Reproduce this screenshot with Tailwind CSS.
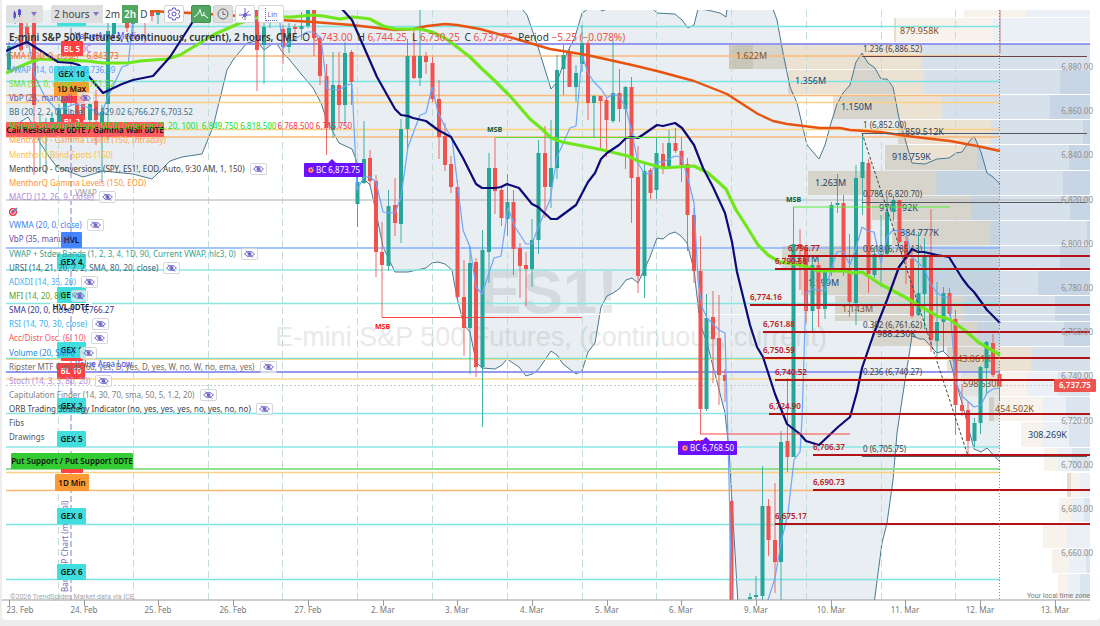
<!DOCTYPE html>
<html lang="en">
<head>
    <meta charset="UTF-8">
    <meta name="viewport" content="width=device-width, initial-scale=1.0">
    <title>E-mini S&amp;P 500 Futures - 2 hours</title>
    <script src="https://cdn.jsdelivr.net/npm/@tailwindcss/browser@4"></script>
</head>
<body class="bg-[#ededee] font-['Noto_Sans','Open_Sans',sans-serif] pl-[2px] pb-1">

    <main class="relative bg-white rounded-b overflow-hidden">

        <svg id="chart" class="block w-full h-auto" viewBox="2 0 1098 620" xmlns="http://www.w3.org/2000/svg" role="img" aria-label="ES1! 2 hour chart">
            <defs>
                <clipPath id="plot"><rect x="6" y="10" width="1084" height="590" /></clipPath>
            </defs>
            <g id="watermark" fill="#e9e9ea" text-anchor="middle" font-family="Liberation Sans, sans-serif">
                <text x="549" y="313" font-size="62" font-weight="700">ES1!</text>
                <text x="551" y="346" font-size="27">E-mini S&amp;P 500 Futures, (continuous, current)</text>
            </g>
            <g id="plot-area" clip-path="url(#plot)"></g>
            <g id="labels"></g>
            <g id="axes"></g>
        </svg>

        <!-- toolbar -->
        <header class="absolute top-[5px] left-[4px] flex items-center h-[18px] text-[10px] text-[#444]">
            <button aria-label="Chart type" class="flex items-center justify-between w-[37px] h-[18px] px-[6px] rounded-[2px] bg-[#dedede]/95">
                <svg class="w-[10px] h-[12px]" viewBox="0 0 10 12" fill="#5a4fc4" stroke="#5a4fc4"><path d="M2.500 3v8M7.500 1v8" /><rect x="2" y="5" width="1.500" height="4" /><rect x="6.500" y="2" width="2" height="4.500" /></svg>
                <svg class="w-[6px] h-[4px]" viewBox="0 0 6 4" fill="#7d74cc"><path d="M0 0h6L3 4z" /></svg>
            </button>
            <div class="flex items-center h-[18px] ml-2 bg-white rounded-[2px]">
                <label class="relative flex items-center h-[18px] bg-[#dedede] rounded-l-[2px]">
                    <select aria-label="Timeframe" class="appearance-none w-[52px] h-[18px] pl-[3px] text-[10px] bg-transparent"><option>2 hours</option></select>
                    <svg class="absolute right-1 w-[6px] h-[4px]" viewBox="0 0 6 4" fill="#7d74cc"><path d="M0 0h6L3 4z" /></svg>
                </label>
                <button class="w-[19px] h-[18px]">2m</button>
                <button class="w-4 h-[18px] bg-[#53a661] text-white font-semibold">2h</button>
                <button class="w-3 h-[18px]">D</button>
            </div>
            <button aria-label="Settings" class="flex items-center justify-center w-5 h-[18px] ml-[14px] rounded-[2px] bg-white border border-[#d5d5d5]">
                <svg class="w-[14px] h-[14px]" viewBox="0 0 14 14" fill="none" stroke="#5a4fc4"><path d="M5.700 1h2.600l.4 1.700 1.300.7 1.700-.5 1.300 2.200-1.200 1.200v1.400l1.200 1.200-1.300 2.200-1.700-.5-1.300.7-.4 1.700H5.700l-.4-1.700-1.300-.7-1.700.5L1 8.900l1.200-1.200V6.300L1 5.100l1.300-2.200 1.700.5 1.300-.7z" /><circle cx="7" cy="7" r="2" /></svg>
            </button>
            <button aria-label="Indicators" class="flex items-center justify-center w-5 h-[18px] ml-[7px] rounded-[2px] bg-[#53a661] border border-[#3f8f4e]">
                <svg class="w-4 h-3" viewBox="0 0 16 12" fill="none" stroke="#fff"><path d="M1 9l4-3 2-4 2 6 2-1 4 3" /><path d="M7 1v2M11 4v3" /></svg>
            </button>
            <button aria-label="History" class="flex items-center justify-center w-5 h-[18px] ml-[2px] rounded-[2px] bg-[#dedede] border border-[#d0d0d0]">
                <svg class="w-3 h-3" viewBox="0 0 12 12" fill="none" stroke="#666"><circle cx="6" cy="6" r="5" /><path d="M6 3v3.500h2.500" /></svg>
            </button>
            <button aria-label="Crosshair" class="flex items-center justify-center w-5 h-[18px] ml-[2px] rounded-[2px] bg-white border border-[#d5d5d5]">
                <svg class="w-[14px] h-[14px]" viewBox="0 0 14 14" fill="none" stroke="#6c63c7"><path d="M7 1v12M1 8h12M4 11l7-7" /><circle cx="7" cy="8" r="1.500" fill="#6c63c7" /></svg>
            </button>
            <button class="flex items-center justify-center w-[26px] h-[18px] ml-[3px] rounded-[2px] bg-white border border-[#d5d5d5] text-[7px] text-[#6c63c7]">
                <span class="border-l border-b border-dotted border-[#6c63c7] pl-[2px] pt-[2px] leading-[10px]">Lin</span>
            </button>
        </header>

        <!-- title + OHLC -->
        <h1 class="absolute top-[30px] left-[7px] flex items-center gap-[5px] h-[14px] whitespace-nowrap text-[10px] text-[#333]">
            <span class="font-semibold">E-mini S&amp;P 500 Futures, (continuous, current), 2 hours, CME</span>
            <span>O <b class="font-normal text-[#ef5350]">6,743.00</b></span>
            <span>H <b class="font-normal text-[#ef5350]">6,744.25</b></span>
            <span>L <b class="font-normal text-[#ef5350]">6,730.25</b></span>
            <span>C <b class="font-normal text-[#ef5350]">6,737.75</b></span>
            <span>Period <b class="font-normal text-[#ef5350]">−5.25 (−0.078%)</b></span>
        </h1>

        <!-- indicator legend, filled below -->
        <div id="legend" class="absolute top-[49px] left-[7px] flex flex-col gap-px text-[8px] leading-[14px] whitespace-nowrap"></div>
    </main>

    <script>
        const NS = 'http://www.w3.org/2000/svg';
        const plot = document.getElementById('plot-area');
        const labels = document.getElementById('labels');
        const axes = document.getElementById('axes');

        function add(parent, tag, attrs, text) {
            const el = document.createElementNS(NS, tag);
            for (const k in attrs) el.setAttribute(k, attrs[k]);
            if (text !== undefined) el.textContent = text;
            parent.appendChild(el);
            return el;
        }
        const line = (p, x1, y1, x2, y2, stroke, w = 1, extra = {}) =>
            add(p, 'line', { x1, y1, x2, y2, stroke, 'stroke-width': w, ...extra });
        const rect = (p, x, y, width, height, fill, extra = {}) =>
            add(p, 'rect', { x, y, width, height, fill, ...extra });
        const label = (p, x, y, text, fill, size = 8, extra = {}) =>
            add(p, 'text', { x, y, fill, 'font-size': size, ...extra }, text);

        // volume profile: y, height, left, beige end, blue end, strength
        const profile = [
            [10, 7, 964, 1027, 1090, 0], [18, 24, 894, 993, 1090, 0], [45, 24, 729, 921, 1090, 1],
            [70, 24, 788, 924, 1060, 1], [95, 24, 833, 942, 1050, 1], [120, 24, 898, 991, 1083, 1],
            [145, 25, 885, 977, 1069, 1], [171, 24, 808, 936, 1063, 1], [196, 24, 872, 971, 1070, 1],
            [221, 24, 892, 990, 1087, 1], [246, 24, 782, 921, 1060, 1], [271, 24, 801, 920, 1038, 1],
            [296, 25, 835, 964, 1055, 1], [322, 24, 872, 977, 1064, 1], [347, 24, 947, 1031, 1090, 1],
            [372, 24, 961, 1027, 1058, 0], [397, 24, 989, 1043, 1066, 0], [422, 25, 1021, 1043, 1069, 0],
            [448, 23, 1044, 1058, 1072, 0], [473, 24, 1067, 1080, 1090, 0], [498, 24, 1059, 1071, 1084, 0],
            [524, 24, 1043, 1067, 1090, 0], [549, 24, 1052, 1069, 1086, 0], [574, 24, 1058, 1068, 1080, 0],
        ];
        profile.forEach(([y, h, a, b, c, s]) => {
            rect(plot, a, y, b - a, h, s ? '#ece2d4' : '#f7f3ec');
            rect(plot, b, y, c - b, h, s ? '#d7e1ec' : '#eaf0f6');
            if (c < 1090) rect(plot, c, y, 1090 - c, h, s ? '#c8d5e4' : '#dbe5ef');
        });
        rect(plot, 729, 45, 24, 24, '#b8a888', { opacity: .3 });
        rect(plot, 989, 397, 5, 24, '#b8a080', { opacity: .3 });
        rect(plot, 894, 18, 2, 24, '#c8a890', { opacity: .3 });
        rect(plot, 1067, 473, 4, 24, '#c8a890', { opacity: .3 });

        // bollinger band
        const bbTop = '6,8 242,8 522,9 527,15 538,47 551,89 557,82 567,53 575,37 582,13 588,9 600,9 602,11 607,9 653,9 657,13 675,14 682,20 688,28 694,25 698,9 707,10 720,13 726,17 727,9 773,9 777,20 783,53 790,87 797,103 807,145 819,159 825,145 831,123 837,104 843,93 850,85 856,62 862,53 868,63 875,68 881,79 887,79 893,87 899,118 912,163 925,164 937,159 949,158 956,153 962,152 968,143 974,136 981,152 987,173 993,177 1000,184';
        const bbLow = '6,136 14,126 28,117 34,127 40,143 50,158 57,167 83,177 103,171 133,174 152,179 170,161 182,157 202,154 213,127 227,70 233,60 247,43 257,41 264,50 272,44 277,44 283,53 289,59 302,75 313,88 321,103 327,121 339,143 352,149 363,178 370,185 376,212 383,247 395,272 408,272 426,268 432,263 438,262 445,264 452,270 457,298 464,325 470,332 476,362 482,368 495,369 502,365 507,359 519,367 526,376 532,374 538,370 551,351 557,355 563,364 576,374 582,371 588,352 595,343 601,307 607,296 613,293 619,289 626,280 632,278 638,283 650,257 657,238 663,239 669,234 675,232 681,236 687,243 694,270 700,323 707,343 725,413 729,450 738,604 874,604 882,543 887,523 893,480 897,433 902,400 912,336 920,339 924,339 937,353 943,351 949,357 956,383 962,403 974,449 981,452 987,448 1000,462';
        add(plot, 'polygon', { points: bbTop + ' ' + bbLow.split(' ').reverse().join(' '), fill: '#4a7890', opacity: .13 });
        [bbTop, bbLow].forEach(points => add(plot, 'polyline', { points, fill: 'none', stroke: '#4a7890' }));

        // session separators
        [58.5, 133.5, 208.5, 282.5, 357.5, 432.5, 507.5, 582.5, 656.5, 731.5, 806.5, 881.5, 955.5].forEach(x =>
            line(plot, x, 10, x, 600, '#c4dcd7', 1, { 'stroke-dasharray': '7 4' }));
        line(plot, 71, 10, 71, 600, '#8a7fc0', 1, { 'stroke-dasharray': '6 3' });

        // key levels: y, colour, width, right end
        [
            [26.5, '#7de3e3', 1.3, 1000], [44, '#9498ee', 2, 1090], [56, '#fbb877', 1.3, 1000], [81.5, '#7de3e3', 1.3, 1000],
            [95.5, '#fbb877', 1.3, 1000], [102.5, '#fbd080', 1.3, 1000], [129.5, '#fbd080', 1.3, 1000], [137, '#fbb877', 1.3, 1000],
            [200, '#c4c7ca', 1.3, 1090], [248, '#86b0fb', 1.3, 1000], [270, '#8ae6e0', 1.3, 1000], [303.5, '#8ae6e0', 1.3, 1000],
            [314.5, '#ffffff', 1, 1090], [358.5, '#7de0d0', 1.3, 1000], [359.5, '#fbd890', 1, 1000], [372, '#9498ee', 2, 1000],
            [379, '#fbd890', 1.3, 1000], [413.5, '#8ae6e6', 1.3, 1000], [447, '#8ae6e6', 1.3, 1000], [469, '#90e090', 2, 1000],
            [472.5, '#fbd080', 1.3, 1000], [490.5, '#fbb877', 1.3, 1000], [524.5, '#7de3e3', 1.3, 1000], [579.5, '#7de3e3', 1.3, 1000],
        ].forEach(([y, c, w, x2]) => line(plot, 6, y, x2, y, c, w));
        line(plot, 6, 385.5, 1060, 385.5, '#c8c8c8', 1, { 'stroke-dasharray': '2 2' });

        // profile volumes
        [
            ['1.622M', 736, 59, 1], ['1.356M', 795, 84, 0], ['879.958K', 900, 34, 1], ['1.150M', 841, 110, 0],
            ['859.512K', 905, 135, 0], ['918.759K', 892, 160, 0], ['1.263M', 815, 186, 0], ['976.792K', 879, 211, 0],
            ['884.777K', 900, 236, 0], ['1.311M', 788, 262, 0], ['1.199M', 808, 286, 0], ['1.143M', 842, 312, 1],
            ['988.230K', 877, 337, 0], ['643.061K', 952, 362, 1], ['598.530K', 963, 387, 1], ['454.502K', 995, 412, 1],
            ['308.269K', 1028, 438, 0],
        ].forEach(([t, x, y, b]) => label(plot, x, y, t, b ? '#84521f' : '#1f436e', 9));

        // candles: x, high, low, body top, body bottom, up?
        const candles = [
            [9, 42, 72, 46, 70, 1], [15, 10, 24, 10, 22, 1], [21, 10, 52, 10, 50, 0], [27, 22, 48, 27, 42, 0],
            [34, 10, 175, 10, 105, 0], [40, 115, 172, 130, 133, 1], [46, 118, 171, 132, 136, 1], [52, 112, 130, 118, 125, 1],
            [59, 104, 130, 108, 122, 1], [65, 98, 128, 103, 118, 1], [77, 94, 128, 100, 115, 0], [83, 90, 130, 93, 120, 0],
            [90, 96, 130, 103, 120, 1], [96, 90, 145, 101, 120, 0], [102, 105, 183, 112, 125, 1], [108, 10, 140, 31, 104, 1],
            [114, 10, 37, 10, 34, 1], [127, 10, 32, 20, 28, 0], [133, 12, 34, 18, 24, 1], [145, 15, 43, 17, 19, 0],
            [152, 10, 21, 11, 16, 0], [158, 10, 24, 10, 15, 1], [257, 10, 91, 10, 50, 0], [264, 15, 84, 27, 45, 1],
            [270, 16, 28, 20, 23, 1], [283, 25, 64, 29, 47, 0], [289, 23, 53, 28, 47, 1], [295, 24, 33, 27, 29, 0],
            [301.5, 12, 40, 26, 29, 1], [308, 10, 28, 10, 26, 1], [314, 10, 56, 10, 38, 0], [320, 36, 85, 38, 76, 0],
            [326.5, 64, 155, 76, 128, 0], [333, 52, 138, 85, 130, 1], [339, 52, 128, 85, 105, 0], [345, 42, 125, 53, 105, 1],
            [351.5, 50, 105, 52, 82, 0], [357.5, 165, 227, 182, 204, 1], [364, 121, 184, 159, 183, 1], [370, 150, 186, 158, 181, 0],
            [376, 175, 277, 181, 252, 0], [382, 222, 317, 252, 265, 0], [388.5, 190, 271, 206, 266, 1], [395, 178, 236, 205, 223, 0],
            [401, 119, 243, 129, 224, 1], [407.5, 39, 150, 56, 129, 1], [414, 28, 79, 56, 78, 0], [420, 10, 86, 56, 78, 1],
            [426, 52, 74, 56, 62, 0], [432.5, 57, 102, 63, 99, 0], [439, 80, 159, 99, 137, 0], [445, 123, 171, 136, 165, 0],
            [451, 156, 193, 164, 187, 0], [457.5, 180, 301, 187, 297, 0], [464, 260, 356, 297, 328, 0], [470, 246, 374, 263, 328, 1],
            [476, 258, 377, 262, 367, 0], [482.5, 230, 427, 250, 367, 1], [489, 153, 283, 168, 252, 1], [495, 138, 214, 168, 191, 0],
            [501.5, 186, 226, 190, 218, 0], [507.5, 174, 236, 202, 219, 1], [513.5, 190, 275, 202, 249, 0], [520, 243, 298, 248, 266, 0],
            [526, 252, 306, 265, 269, 0], [532, 219, 287, 240, 269, 1], [538.5, 140, 254, 153, 240, 1], [545, 126, 218, 153, 187, 0],
            [551, 120, 208, 168, 187, 1], [557, 55, 179, 70, 168, 1], [563.5, 45, 95, 55, 69, 1], [569.5, 47, 87, 52, 87, 0],
            [576, 65, 102, 73, 87, 1], [582, 25, 72, 43, 64, 1], [588, 40, 120, 43, 103, 0], [594, 95, 137, 96, 103, 1],
            [600.5, 96, 149, 96, 101, 0], [606.5, 98, 157, 100, 120, 0], [613, 40, 123, 93, 121, 1], [619.5, 69, 122, 93, 109, 0],
            [625.5, 86, 169, 87, 109, 1], [631.5, 77, 223, 87, 178, 0], [638, 146, 293, 177, 276, 0], [644.5, 163, 298, 171, 276, 1],
            [650.5, 168, 199, 170, 193, 0], [656.5, 137, 199, 153, 190, 1], [663, 143, 174, 154, 167, 0], [669, 130, 168, 143, 167, 1],
            [675.5, 128, 153, 143, 151, 0], [681.5, 137, 182, 151, 165, 0], [687.5, 158, 251, 164, 215, 0], [694, 208, 283, 215, 271, 0],
            [700.5, 236, 434, 271, 409, 0], [706.5, 294, 411, 318, 409, 1], [713, 291, 383, 317, 339, 0], [719, 295, 405, 338, 375, 0],
            [725, 369, 402, 375, 381, 0], [731.5, 485, 600, 501, 600, 0], [750, 593, 600, 597, 599, 1], [756, 576, 600, 595, 597, 1],
            [762.5, 466, 600, 506, 596, 1], [768.5, 499, 556, 506, 540, 0], [775, 483, 593, 540, 562, 0], [781, 431, 600, 442, 562, 1],
            [787.5, 378, 472, 441, 457, 0], [793.5, 207, 457, 244, 457, 1], [800, 229, 290, 244, 249, 0], [806, 245, 323, 248, 311, 0],
            [812.5, 258, 331, 265, 311, 1], [818.5, 262, 327, 265, 309, 0], [825, 268, 319, 272, 309, 1], [831.5, 202, 276, 205, 268, 1],
            [837.5, 174, 213, 203, 205, 1], [843.5, 195, 276, 203, 269, 0], [849.5, 234, 317, 269, 302, 0], [856, 165, 325, 178, 303, 1],
            [862.5, 133, 215, 162, 178, 1], [868.5, 159, 293, 163, 274, 0], [874.5, 247, 278, 254, 275, 1], [881, 215, 287, 254, 256, 1],
            [887, 198, 257, 212, 254, 1], [893.5, 197, 221, 200, 212, 1], [899.5, 200, 243, 200, 242, 0], [906, 236, 284, 241, 259, 0],
            [912, 250, 318, 259, 316, 0], [918.5, 232, 316, 293, 315, 1], [924.5, 238, 329, 257, 294, 1], [931, 209, 352, 256, 340, 0],
            [937, 282, 358, 322, 341, 1], [943.5, 287, 352, 293, 322, 1], [949.5, 288, 316, 293, 314, 0], [955.5, 310, 435, 319, 405, 0],
            [962, 384, 416, 405, 411, 0], [968, 402, 456, 410, 441, 0], [974.5, 418, 447, 423, 441, 1], [980.5, 366, 434, 367, 423, 1],
            [986.5, 341, 394, 342, 368, 1], [993, 334, 377, 343, 375, 0], [999.5, 374, 401, 374, 386, 0],
        ];
        candles.forEach(([x, hi, lo, a, b, up]) => {
            const c = up ? '#26a69a' : '#ef5350';
            line(plot, x, hi, x, lo, c, 1, { opacity: .85 });
            rect(plot, x - 2, a, 4, Math.max(b - a, 1), c);
        });

        // moving averages
        const curves = [
            ['#6fa5fa', 1.2, '6,55 17,40 27,35 35,77 45,97 57,110 67,107 75,104 90,108 101,115 108,97 122,67 128,65 133,20 135,5'],
            ['#6fa5fa', 1.2, '278,5 281,33 283,48 293,40 307,32 313,32 321,38 327,89 339,90 347,85 352,84 357,190 364,177 370,177 376,182 383,212 395,213 401,197 408,147 420,115 426,113 432,87 438,112 445,127 452,138 457,180 463,230 470,247 476,287 482,294 494,258 501,256 508,208 515,227 526,244 532,244 538,228 550,200 557,157 570,128 576,126 582,55 588,73 594,82 601,89 607,98 613,94 619,96 626,108 632,133 638,163 644,173 650,174 657,162 663,162 675,156 681,157 687,175 694,203 698,280 702,307 707,318 719,330 725,333 728,440 732,605'],
            ['#6fa5fa', 1.2, '768,600 775,578 781,543 788,513 794,460 800,452 802,420 806,293 813,289 825,291 831,270 837,252 843,251 850,265 856,248 862,227 868,231 874,232 881,263 887,237 893,230 906,232 912,257 924,268 930,283 937,293 943,297 949,297 956,383 962,396 974,407 981,405 987,393 993,389 1000,388'],
            ['#e8530f', 2.4, '150,11 190,13 240,16 280,20 313,22 352,25 395,30 413,29 427,26 445,24 457,25 480,29 513,38 550,49 587,55 632,65 657,71 694,81 727,94 747,107 758,114 773,121 787,124 820,128 840,128 850,130 880,132 907,136 950,141 977,146 1000,151'],
            ['#70e61c', 3.2, '6,73 17,68 28,63 40,59 60,60 87,61 103,63 128,63 140,61 167,59 180,55 200,43 213,35 240,23 260,17 280,17 292,17 312,15 323,16 340,19 352,17 363,18 370,19 383,26 395,29 408,29 420,29 432,32 445,38 457,47 470,57 480,67 495,81 510,96 530,119 542,129 551,138 562,142 583,146 603,150 628,156 638,161 663,168 677,167 694,166 708,173 715,179 726,189 736,210 747,227 758,245 768,255 780,262 795,264 807,267 818,271 837,271 845,271 852,273 862,272 880,284 903,296 920,306 937,316 949,319 967,332 978,342 1000,355'],
            ['#0b0b78', 2.2, '6,51 17,46 27,42 35,47 58,62 72,63 79,65 103,93 122,84 133,80 153,76 170,57 192,23 204,5'],
            ['#0b0b78', 2.2, '341,8 352,20 363,45 377,77 395,109 401,115 408,116 413,118 426,121 438,130 451,137 463,158 476,184 482,188 495,188 501,187 507,184 519,188 532,204 538,207 551,219 557,219 576,205 588,182 595,173 601,159 607,153 619,145 626,138 632,137 638,138 644,134 657,125 663,126 675,123 682,128 694,145 703,168 713,187 725,213 732,242 737,272 750,325 757,347 763,357 775,394 787,424 800,434 806,441 819,445 838,427 850,417 857,392 862,368 874,333 887,300 899,267 912,249 918,252 924,252 937,255 949,257 962,278 968,286 974,292 987,310 993,316 1000,323'],
        ];
        curves.forEach(([stroke, w, points]) =>
            add(plot, 'polyline', { points, fill: 'none', stroke, 'stroke-width': w, 'stroke-linejoin': 'round' }));

        // market structure breaks
        line(plot, 495, 137.5, 675, 137.5, '#54dc3c');
        line(plot, 794, 207, 950, 207, '#54ee3c');
        line(plot, 382, 317.5, 582, 317.5, '#ff4444');
        line(plot, 700, 434, 850, 434, '#ff4444');
        const msb = { 'font-weight': 700 };
        label(labels, 487, 132, 'MSB', '#0b5a3a', 7, msb);
        label(labels, 786, 202, 'MSB', '#0b5a3a', 7, msb);
        label(labels, 375, 329, 'MSB', '#ff1111', 7, msb);
        label(labels, 693, 445, 'MSB', '#ff1111', 7, msb);

        // fibonacci retracement
        line(plot, 862, 133, 968, 456, '#444', 1, { 'stroke-dasharray': '3 2' });
        [['1.236 (6,886.52)', 56.5, 52], ['1 (6,852.00)', 133.5, 128], ['0.786 (6,820.70)', 202.5, 197], ['0.618 (6,785.13)', 256.5, 252],
         ['0.382 (6,761.62)', 332.5, 328], ['0.236 (6,740.27)', 380.5, 375], ['0 (6,705.75)', 456.5, 452]].forEach(([t, y, ty], i) => {
            line(plot, 862, y, 1087, y, i ? '#555a60' : '#6b4340');
            label(labels, 863, ty, t, '#444', 8);
        });

        // support / resistance
        [['6,796.77', 788, 256], ['6,790.68', 775, 269], ['6,774.16', 750, 305], ['6,761.88', 763, 332], ['6,750.59', 763, 358],
         ['6,740.52', 775, 380], ['6,724.90', 769, 414], ['6,706.37', 813, 455], ['6,690.73', 813, 490], ['6,675.17', 775, 524]].forEach(([t, x, y]) => {
            line(plot, x, y, 1090, y, '#b51218', 2);
            label(labels, x, y - 5, t, '#bb1a20', 8, { 'font-weight': 600 });
        });
        line(plot, 1000, 10, 1000, 53, '#c08080', 1);
        line(plot, 999.5, 10, 999.5, 600, '#e0559a', 1, { 'stroke-dasharray': '1 2' });

        // buy-climax flags
        [[304, 163, 'BC 6,873.75'], [678, 441, 'BC 6,768.50']].forEach(([x, y, t]) => {
            add(labels, 'path', { d: `M${x + 24} ${y}l4-4 4 4z`, fill: '#6a11ff' });
            rect(labels, x, y, 59, 14, '#6a11ff', { rx: 1 });
            target(labels, x + 7, y + 7);
            label(labels, x + 12, y + 10, t, '#fff', 8);
        });
        function target(p, cx, cy) {
            add(p, 'circle', { cx, cy, r: 3, fill: '#e8304a' });
            add(p, 'circle', { cx, cy, r: 2, fill: 'none', stroke: '#fff', 'stroke-width': .7 });
            line(p, cx, cy, cx + 3, cy - 3, '#3b8fe0', 1);
        }

        // level tags on the left: x, y, w, h, fill, text, text colour
        label(labels, 75, 39, 'Value Area Median', '#4040f0', 8);
        label(labels, 75, 52, 'POC', '#c070e0', 8);
        label(labels, 75, 196, 'VWAP', '#9a9a9a', 8);
        label(labels, 75, 367, 'Value Area Low', '#3434f4', 8);
        label(labels, 68, 592, 'Bars VbP Chart (manual)', '#7a68b0', 8, { transform: 'rotate(-90 68 592)' });
        rect(labels, 50, 303, 42, 9, '#ffffff');
        [
            [57, 18, 29, 8, '#40dede', ''], [61, 41, 22, 15, '#ff4144', 'BL 5', '#fff'], [61, 96, 22, 7, '#ff4144', ''],
            [54, 66, 35, 15, '#40dede', 'GEX 10'], [54, 82, 35, 14, '#ff9933', '1D Max'], [61, 114, 22, 15, '#ff4144', 'BL 2', '#fff'],
            [6, 122, 158, 15, '#ff5b60', 'Call Resistance 0DTE / Gamma Wall 0DTE'], [61, 232, 21, 16, '#4285ff', 'HVL'],
            [57, 254, 29, 15, '#40dede', 'GEX 4'], [57, 287, 29, 16, '#40dede', 'GEX 3'], [50, 299, 42, 15, 'none', 'HVL 0DTE'],
            [57, 342, 29, 16, '#40dede', 'GEX 1'], [61, 358, 22, 3, '#ff4144', ''], [57, 363, 28, 16, '#ff4144', 'BL 10', '#fff'],
            [57, 398, 29, 15, '#40dede', 'GEX 2'], [57, 431, 29, 16, '#40dede', 'GEX 5'], [61, 465, 22, 8, '#ff4144', ''],
            [11, 453, 122, 16, '#33cc33', 'Put Support / Put Support 0DTE'], [55, 474, 34, 17, '#ff9933', '1D Min'],
            [57, 508, 29, 16, '#40dede', 'GEX 8'], [57, 564, 29, 16, '#40dede', 'GEX 6'],
        ].forEach(([x, y, w, h, fill, t, c]) => {
            rect(labels, x, y, w, h, fill, { rx: 1 });
            label(labels, x + w / 2, y + h / 2 + 3, t, c || '#111', 8, { 'font-weight': 600, 'text-anchor': 'middle' });
        });

        // axes
        line(axes, 2, 600, 1090, 600, '#9a9a9a');
        ['23. Feb', '24. Feb', '25. Feb', '26. Feb', '27. Feb', '2. Mar', '3. Mar', '4. Mar', '5. Mar', '6. Mar', '9. Mar', '10. Mar', '11. Mar', '12. Mar', '13. Mar'].forEach((t, i) => {
            const x = Math.round(9 + i * 74.7);
            line(axes, x + .5, 600, x + .5, 606, '#9a9a9a');
            label(axes, i ? x : 20, 613, t, '#777', 8, { 'text-anchor': 'middle' });
        });
        for (let i = 0; i < 12; i++) {
            label(axes, 1093, Math.round(70 + i * 44.2), `6,${880 - i * 20}.00`, '#909090', 8, { 'text-anchor': 'end' });
        }
        rect(axes, 1054, 379, 42, 13, '#ef5350', { rx: 1 });
        label(axes, 1075, 388, '6,737.75', '#fff', 8, { 'text-anchor': 'middle', 'font-weight': 600 });
        const small = { 'font-family': 'Roboto, sans-serif' };
        label(axes, 10, 599, '©2026 TrendSpider. Market data via ICE.', '#a5a5a5', 7, small);
        label(axes, 1090, 598, 'Your local time zone', '#777', 7, { ...small, 'text-anchor': 'end' });

        // legend rows: text, colour, hidden?, [extra coloured values]
        const rows = [
            ['SMA (200, 0, close)    6,843.73', '#ea6a35'],
            ['VWAP (14, 0, hlc3)    6,736.39', '#5b9bfa'],
            ['SMA (50, 0, close)    6,751.52', '#70dc28'],
            ['VbP (25, manual)', '#6650a0', 1],
            ['BB (20, 2, 2, 0, close)    6,829.02 6,766.27 6,703.52', '#3f6f88'],
            ['Market Structure Break (MSB) Detector (2, 20, 100)  6,849.750 6,818.500', '#14e014', 0, '6,768.500 6,715.750'],
            ['MenthorQ - Gamma Levels (150, Intraday)', '#ffa24a'],
            ['MenthorQ Blind Spots (150)', '#ffbf4a'],
            ['MenthorQ - Conversions (SPY, ES1!, EOD, Auto, 9:30 AM, 1, 150)', '#444444', 1],
            ['MenthorQ Gamma Levels (150, EOD)', '#ff9433'],
            ['MACD (12, 26, 9, close)', '#b08cdc', 1],
            ['', '#444444'],
            ['VWMA (20, 0, close)', '#3d85f5', 1],
            ['VbP (35, manual)', '#6650a0'],
            ['VWAP + Stdev Bands (1, 2, 3, 4, 1D, 90, Current VWAP, hlc3, 0)', '#36a08e', 1],
            ['URSI (14, 21, 20, 2, 2, SMA, 80, 20, close)', '#3d6478', 1],
            ['ADXDI (14, 35, 20)', '#38b0f0', 1],
            ['MFI (14, 20, 80)', '#58a028', 1],
            ['SMA (20, 0, close)    6,766.27', '#34348c'],
            ['RSI (14, 70, 30, close)', '#38b0f0', 1],
            ['Acc/Distr Osc. (6, 10)', '#ff5452', 1],
            ['Volume (20, SMA)', '#1e88e5', 1],
            ['Ripster MTF Clouds (60, yes, D, yes, D, yes, W, no, W, no, ema, yes)', '#6c6c6c', 1],
            ['Stoch (14, 3, 3, 80, 20)', '#b08cdc', 1],
            ['Capitulation Finder (14, 30, 70, sma, 50, 5, 1.2, 20)', '#808080', 1],
            ['ORB Trading Strategy Indicator (no, yes, yes, yes, no, yes, no, no)', '#444444', 1],
            ['Fibs', '#555555'],
            ['Drawings', '#555555'],
        ];
        const eye = '<svg class="w-[11px] h-[8px]" viewBox="0 0 11 8" fill="none" stroke="#6c63c7"><path d="M.7 4C3 .6 8 .6 10.300 4 8 7.400 3 7.400.7 4z"/><circle cx="5.500" cy="4" r="1.500" fill="#6c63c7"/><path d="M2 .5l7 7"/></svg>';
        const bull = '<svg class="w-[9px] h-[9px]" viewBox="0 0 9 9"><circle cx="4" cy="5" r="4" fill="#e0304a"/><circle cx="4" cy="5" r="2.300" fill="none" stroke="#fff"/><path d="M4 5l4-4" stroke="#3b8fe0" stroke-width="1.500"/></svg>';
        const legend = document.getElementById('legend');
        for (let g = 0; g < rows.length; g += 7) {
            const ul = document.createElement('ul');
            rows.slice(g, g + 7).forEach(([t, color, hidden, extra]) => {
                const li = document.createElement('li');
                li.className = 'flex items-center gap-[5px] h-[14px] whitespace-pre';
                li.style.color = color;
                li.innerHTML = t ? `<span>${t}</span>` : bull;
                if (extra) li.innerHTML += `<span class="-ml-1 text-[#f23645]">${extra}</span>`;
                if (hidden) li.innerHTML += `<button aria-label="Show ${t}" class="flex items-center justify-center w-[17px] h-[12px] rounded-[2px] border border-[#d5d5dc] bg-white/60">${eye}</button>`;
                ul.appendChild(li);
            });
            legend.appendChild(ul);
        }
    </script>
</body>
</html>
